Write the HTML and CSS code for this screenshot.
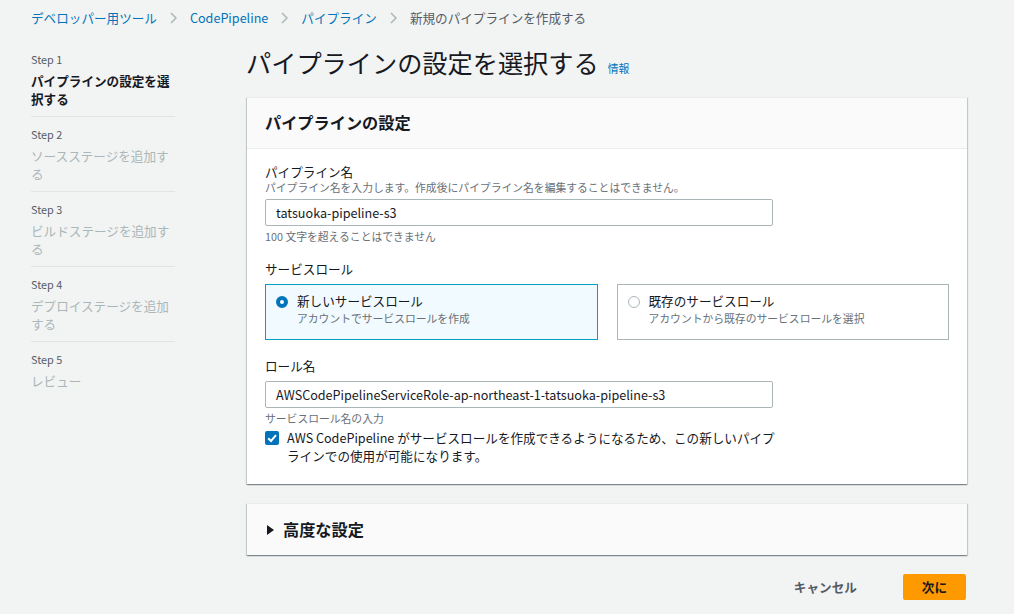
FILE: index.html
```html
<!DOCTYPE html>
<html lang="ja">
<head>
<meta charset="utf-8">
<title>パイプラインの設定を選択する</title>
<link rel="stylesheet" href="styles.css">
</head>
<body>
<nav class="breadcrumbs">
  <a class="crumb crumb-link">デベロッパー用ツール</a>
  <svg class="chev" width="7" height="12" viewBox="0 0 7 12"><polyline points="1,1 6,6 1,11"/></svg>
  <a class="crumb crumb-link">CodePipeline</a>
  <svg class="chev" width="7" height="12" viewBox="0 0 7 12"><polyline points="1,1 6,6 1,11"/></svg>
  <a class="crumb crumb-link">パイプライン</a>
  <svg class="chev" width="7" height="12" viewBox="0 0 7 12"><polyline points="1,1 6,6 1,11"/></svg>
  <span class="crumb crumb-current">新規のパイプラインを作成する</span>
</nav>
<div class="layout">
  <aside class="steps">
    <div class="step step-active">
      <div class="step-num">Step 1</div>
      <div class="step-title">パイプラインの設定を選択する</div>
    </div>
    <div class="step">
      <div class="step-num">Step 2</div>
      <div class="step-title">ソースステージを追加する</div>
    </div>
    <div class="step">
      <div class="step-num">Step 3</div>
      <div class="step-title">ビルドステージを追加する</div>
    </div>
    <div class="step">
      <div class="step-num">Step 4</div>
      <div class="step-title">デプロイステージを追加する</div>
    </div>
    <div class="step step-last">
      <div class="step-num">Step 5</div>
      <div class="step-title">レビュー</div>
    </div>
  </aside>
  <main class="main">
    <div class="title-row">
      <h1 class="page-title">パイプラインの設定を選択する</h1>
      <a class="info-link">情報</a>
    </div>
    <section class="card">
      <div class="card-header"><h2 class="card-title">パイプラインの設定</h2></div>
      <div class="card-body">
        <div class="label label-tight">パイプライン名</div>
        <div class="desc">パイプライン名を入力します。作成後にパイプライン名を編集することはできません。</div>
        <div class="input input-first">tatsuoka-pipeline-s3</div>
        <div class="constraint">100 文字を超えることはできません</div>

        <div class="label label-spaced">サービスロール</div>
        <div class="tiles">
          <div class="tile tile-selected">
            <span class="radio radio-on"></span>
            <div class="tile-text">
              <div class="tile-title">新しいサービスロール</div>
              <div class="tile-sub">アカウントでサービスロールを作成</div>
            </div>
          </div>
          <div class="tile">
            <span class="radio"></span>
            <div class="tile-text">
              <div class="tile-title">既存のサービスロール</div>
              <div class="tile-sub">アカウントから既存のサービスロールを選択</div>
            </div>
          </div>
        </div>

        <div class="label label-spaced">ロール名</div>
        <div class="input input-second">AWSCodePipelineServiceRole-ap-northeast-1-tatsuoka-pipeline-s3</div>
        <div class="constraint">サービスロール名の入力</div>

        <div class="check-row">
          <svg class="checkbox" width="14" height="14" viewBox="0 0 14 14"><rect x="0" y="0" width="14" height="14" rx="2" fill="#0073bb"/><polyline points="3.2,7.2 6,10 11,4.2" fill="none" stroke="#ffffff" stroke-width="2"/></svg>
          <div class="check-text">AWS CodePipeline がサービスロールを作成できるようになるため、この新しいパイプラインでの使用が可能になります。</div>
        </div>
      </div>
    </section>

    <section class="card card-collapsed">
      <div class="expander">
        <svg class="caret" width="7" height="10" viewBox="0 0 7 10"><polygon points="0,0 7,5 0,10" fill="#16191f"/></svg>
        <h2 class="card-title">高度な設定</h2>
      </div>
    </section>

    <div class="actions">
      <a class="btn-link">キャンセル</a>
      <a class="btn-primary">次に</a>
    </div>
  </main>
</div>
</body>
</html>
```

FILE: styles.css
```css
html, body {
  margin: 0;
  padding: 0;
}

body {
  background: #f2f3f3;
  color: #16191f;
  font-family: "Noto Sans CJK JP", "Noto Sans", sans-serif;
  font-size: 12.6px;
  line-height: 18px;
}

/* Breadcrumbs */
.breadcrumbs {
  display: flex;
  align-items: center;
  padding: 10px 31px 0 31px;
  height: 16px;
  line-height: 16px;
}

.crumb {
  white-space: nowrap;
}

.crumb-link {
  color: #0073bb;
}

.crumb-current {
  color: #545b64;
}

.chev {
  margin: 0 13px;
  fill: none;
  stroke: #aab7b8;
  stroke-width: 1.5;
}

/* Layout */
.layout {
  display: flex;
  gap: 72px;
  padding: 20px 47px 0 31px;
}

.steps {
  width: 144px;
  flex: none;
  padding-top: 5px;
}

.step {
  padding: 9px 0 8px 0;
  border-bottom: 1px solid #e1e4e4;
}

.step:first-child {
  padding-top: 0;
}

.step-last {
  border-bottom: none;
}

.step-num {
  font-size: 10.8px;
  line-height: 16px;
  color: #545b64;
}

.step-title {
  margin-top: 5px;
  line-height: 18px;
  font-size: 12.6px;
  color: #aab7b8;
}

.step-active .step-title {
  color: #16191f;
  font-weight: 700;
}

.main {
  width: 720px;
  flex: none;
}

.title-row {
  display: flex;
  align-items: baseline;
  gap: 9px;
  height: 32px;
}

.page-title {
  margin: 0;
  font-size: 25.2px;
  line-height: 32px;
  font-weight: 400;
  color: #16191f;
  margin-left: -1px;
}

.info-link {
  font-size: 10.8px;
  color: #0073bb;
}

/* Cards */
.card {
  margin-top: 19px;
  background: #ffffff;
  border-top: 1px solid #eaeded;
  box-shadow: 0 1px 1px 0 rgba(0, 28, 36, 0.3), 1px 1px 1px 0 rgba(0, 28, 36, 0.15), -1px 1px 1px 0 rgba(0, 28, 36, 0.15);
}

.card-header {
  background: #fafafa;
  padding: 13px 18px 14px 18px;
  border-bottom: 1px solid #eaeded;
}

.card-title {
  margin: 0;
  font-size: 16.2px;
  line-height: 23px;
  font-weight: 700;
  color: #16191f;
}

.card-body {
  padding: 16px 18px 19px 18px;
}

.label {
  font-size: 12.6px;
  line-height: 16px;
  color: #16191f;
}

.label-tight {
  line-height: 14px;
}

.label-spaced {
  margin-top: 18px;
}

.desc {
  margin-top: 1px;
  font-size: 10.8px;
  line-height: 14px;
  color: #687078;
}

.input {
  box-sizing: border-box;
  width: 508px;
  height: 27px;
  border: 1px solid #aab7b8;
  border-radius: 2px;
  background: #ffffff;
  padding: 0 10px;
  line-height: 25px;
  font-size: 12.6px;
  color: #16191f;
  white-space: nowrap;
}

.input-first {
  margin-top: 5px;
}

.input-second {
  margin-top: 7px;
}

.constraint {
  margin-top: 3px;
  font-size: 10.8px;
  line-height: 14px;
  color: #687078;
}

/* Radio tiles */
.tiles {
  margin-top: 7px;
  display: grid;
  grid-template-columns: 1fr 1fr;
  gap: 19px;
  width: 684px;
}

.tile {
  box-sizing: border-box;
  height: 56px;
  border: 1px solid #aab7b8;
  background: #ffffff;
  padding: 8px 10px 0 10px;
  display: flex;
  gap: 9px;
}

.tile-selected {
  border-color: #00a1c9;
  background: #f1faff;
}

.radio {
  box-sizing: border-box;
  flex: none;
  width: 12px;
  height: 12px;
  margin-top: 3px;
  border-radius: 50%;
  border: 1px solid #aab7b8;
  background: #ffffff;
}

.radio-on {
  border: 4px solid #0073bb;
}

.tile-title {
  font-size: 12.6px;
  line-height: 16px;
  color: #16191f;
}

.tile-sub {
  margin-top: 2px;
  font-size: 10.8px;
  line-height: 14px;
  color: #687078;
}

/* Checkbox */
.check-row {
  margin-top: 4px;
  display: flex;
  gap: 8px;
}

.checkbox {
  flex: none;
  margin-top: 2px;
}

.check-text {
  width: 490px;
  font-size: 12.6px;
  line-height: 18px;
  color: #16191f;
}

/* Collapsed section */
.card-collapsed {
  background: #fafafa;
}

.expander {
  display: flex;
  align-items: center;
  gap: 9px;
  padding: 14px 18px 14px 20px;
}

.caret {
  flex: none;
}

/* Actions */
.actions {
  margin-top: 19px;
  display: flex;
  justify-content: flex-end;
  align-items: center;
  gap: 28px;
}

.btn-link {
  padding: 0 18px;
  line-height: 26px;
  font-weight: 700;
  color: #545b64;
}

.btn-primary {
  box-sizing: border-box;
  height: 26px;
  line-height: 26px;
  padding: 0 19px;
  background: #ff9900;
  border-radius: 2px;
  font-weight: 700;
  color: #16191f;
  margin-right: 1px;
}
```
